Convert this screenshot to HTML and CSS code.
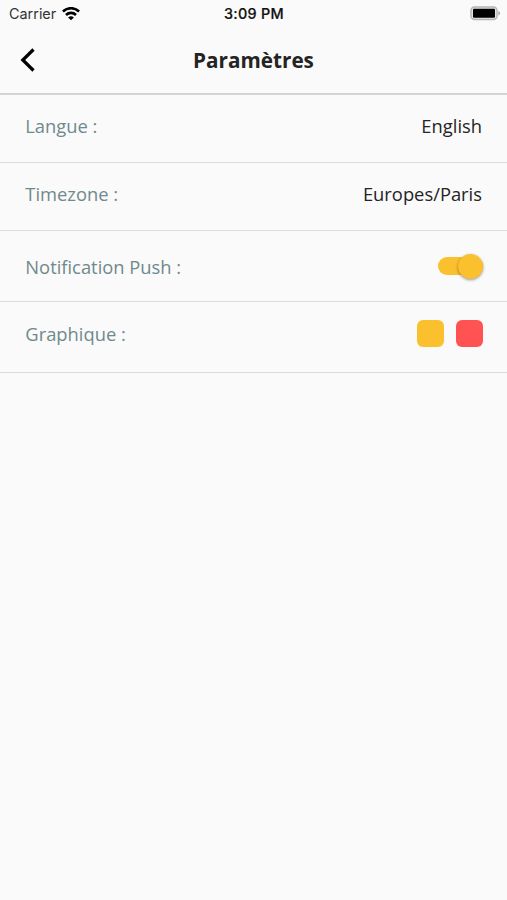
FILE: index.html
```html
<!DOCTYPE html>
<html lang="fr">
<head>
<meta charset="utf-8">
<title>Paramètres</title>
<link rel="stylesheet" href="styles.css">
</head>
<body>
<div class="status">
  <div class="carrier"><span>Carrier</span>
    <svg class="wifi" width="18" height="14" viewBox="0 0 18 14" fill="none" stroke="#000" stroke-width="2.6"><path d="M.9 4.500C5.400.1 12.600.1 17.100 4.500"/><path d="M4 8C6.800 5.200 11.200 5.200 14 8"/><path d="M9 13.300L6.100 10.400Q9 7.900 11.900 10.400Z" fill="#000" stroke="none"/></svg>
  </div>
  <time class="clock">3:09 PM</time>
  <svg class="battery" width="30" height="15" viewBox="0 0 30 15"><rect x="1" y="1" width="26" height="12.500" rx="3.500" fill="#e4e4e4" stroke="#b5b5b5" stroke-width="1.500"/><rect x="3" y="2.800" width="22" height="9" rx="1"/><path d="M28.300 5Q30 5.500 30 7.250T28.300 9.500Z" fill="#a5a5a5"/></svg>
</div>
<header class="header">
  <svg class="back" width="16" height="24" viewBox="0 0 16 24" fill="none" stroke="#000" stroke-width="3.2"><path d="M13.500 1.500L2.800 12L13.500 22.500"/></svg>
  <h1>Paramètres</h1>
</header>
<main>
  <div class="row"><span class="label">Langue :</span><span class="value">English</span></div>
  <div class="row"><span class="label">Timezone :</span><span class="value">Europes/Paris</span></div>
  <div class="row push"><span class="label">Notification Push :</span><span class="toggle"><span class="knob"></span></span></div>
  <div class="row chart"><span class="label">Graphique :</span><span class="swatches"><i class="swatch yellow"></i><i class="swatch red"></i></span></div>
</main>
</body>
</html>
```
FILE: styles.css
```css
* { box-sizing: border-box; }
body { margin: 0; min-height: 900px; background: #fafafa; color: #242424; font-family: "Open Sans", sans-serif; }
.status { height: 27px; display: grid; grid-template-columns: 1fr auto 1fr; align-items: center; padding: 0 7px 0 9px; font: 14.4px Inter, sans-serif; color: #111; }
.carrier { display: flex; align-items: center; gap: 6px; color: #333; }
.wifi { margin-left: -0.5px; }
.clock { font-weight: 500; letter-spacing: 0.3px; margin-left: -1px; -webkit-text-stroke: 0.2px #111; }
.battery { justify-self: end; }
.header { height: 68px; display: grid; grid-template-columns: 40px 1fr 40px; align-items: center; padding: 0 20px; border-bottom: 2px solid #d3d5d5; }
h1 { margin: 0; text-align: center; font-size: 20.7px; font-weight: 700; }
.row { height: 68px; display: flex; align-items: center; justify-content: space-between; padding: 0 25px 6px; border-bottom: 1px solid #d9dcdc; font-size: 18.35px; }
.push { height: 71px; padding: 0 24px 0 25px; }
.chart { height: 71px; padding: 0 24px 7px 25px; }
.label { color: #70898c; margin-left: 0.3px; }
.toggle { width: 45px; height: 18px; border-radius: 9px; background: #fbc02d; display: flex; align-items: center; justify-content: flex-end; }
.knob { width: 25px; height: 25px; flex: none; border-radius: 50%; background: #fbc02d; box-shadow: 0 1px 3px rgba(0,0,0,.4); }
.swatches { display: flex; gap: 12px; margin-right: 0.5px; }
.swatch { width: 27px; height: 27px; border-radius: 6px; }
.yellow { background: #fbc02d; }
.red { background: #ff5252; }
```
